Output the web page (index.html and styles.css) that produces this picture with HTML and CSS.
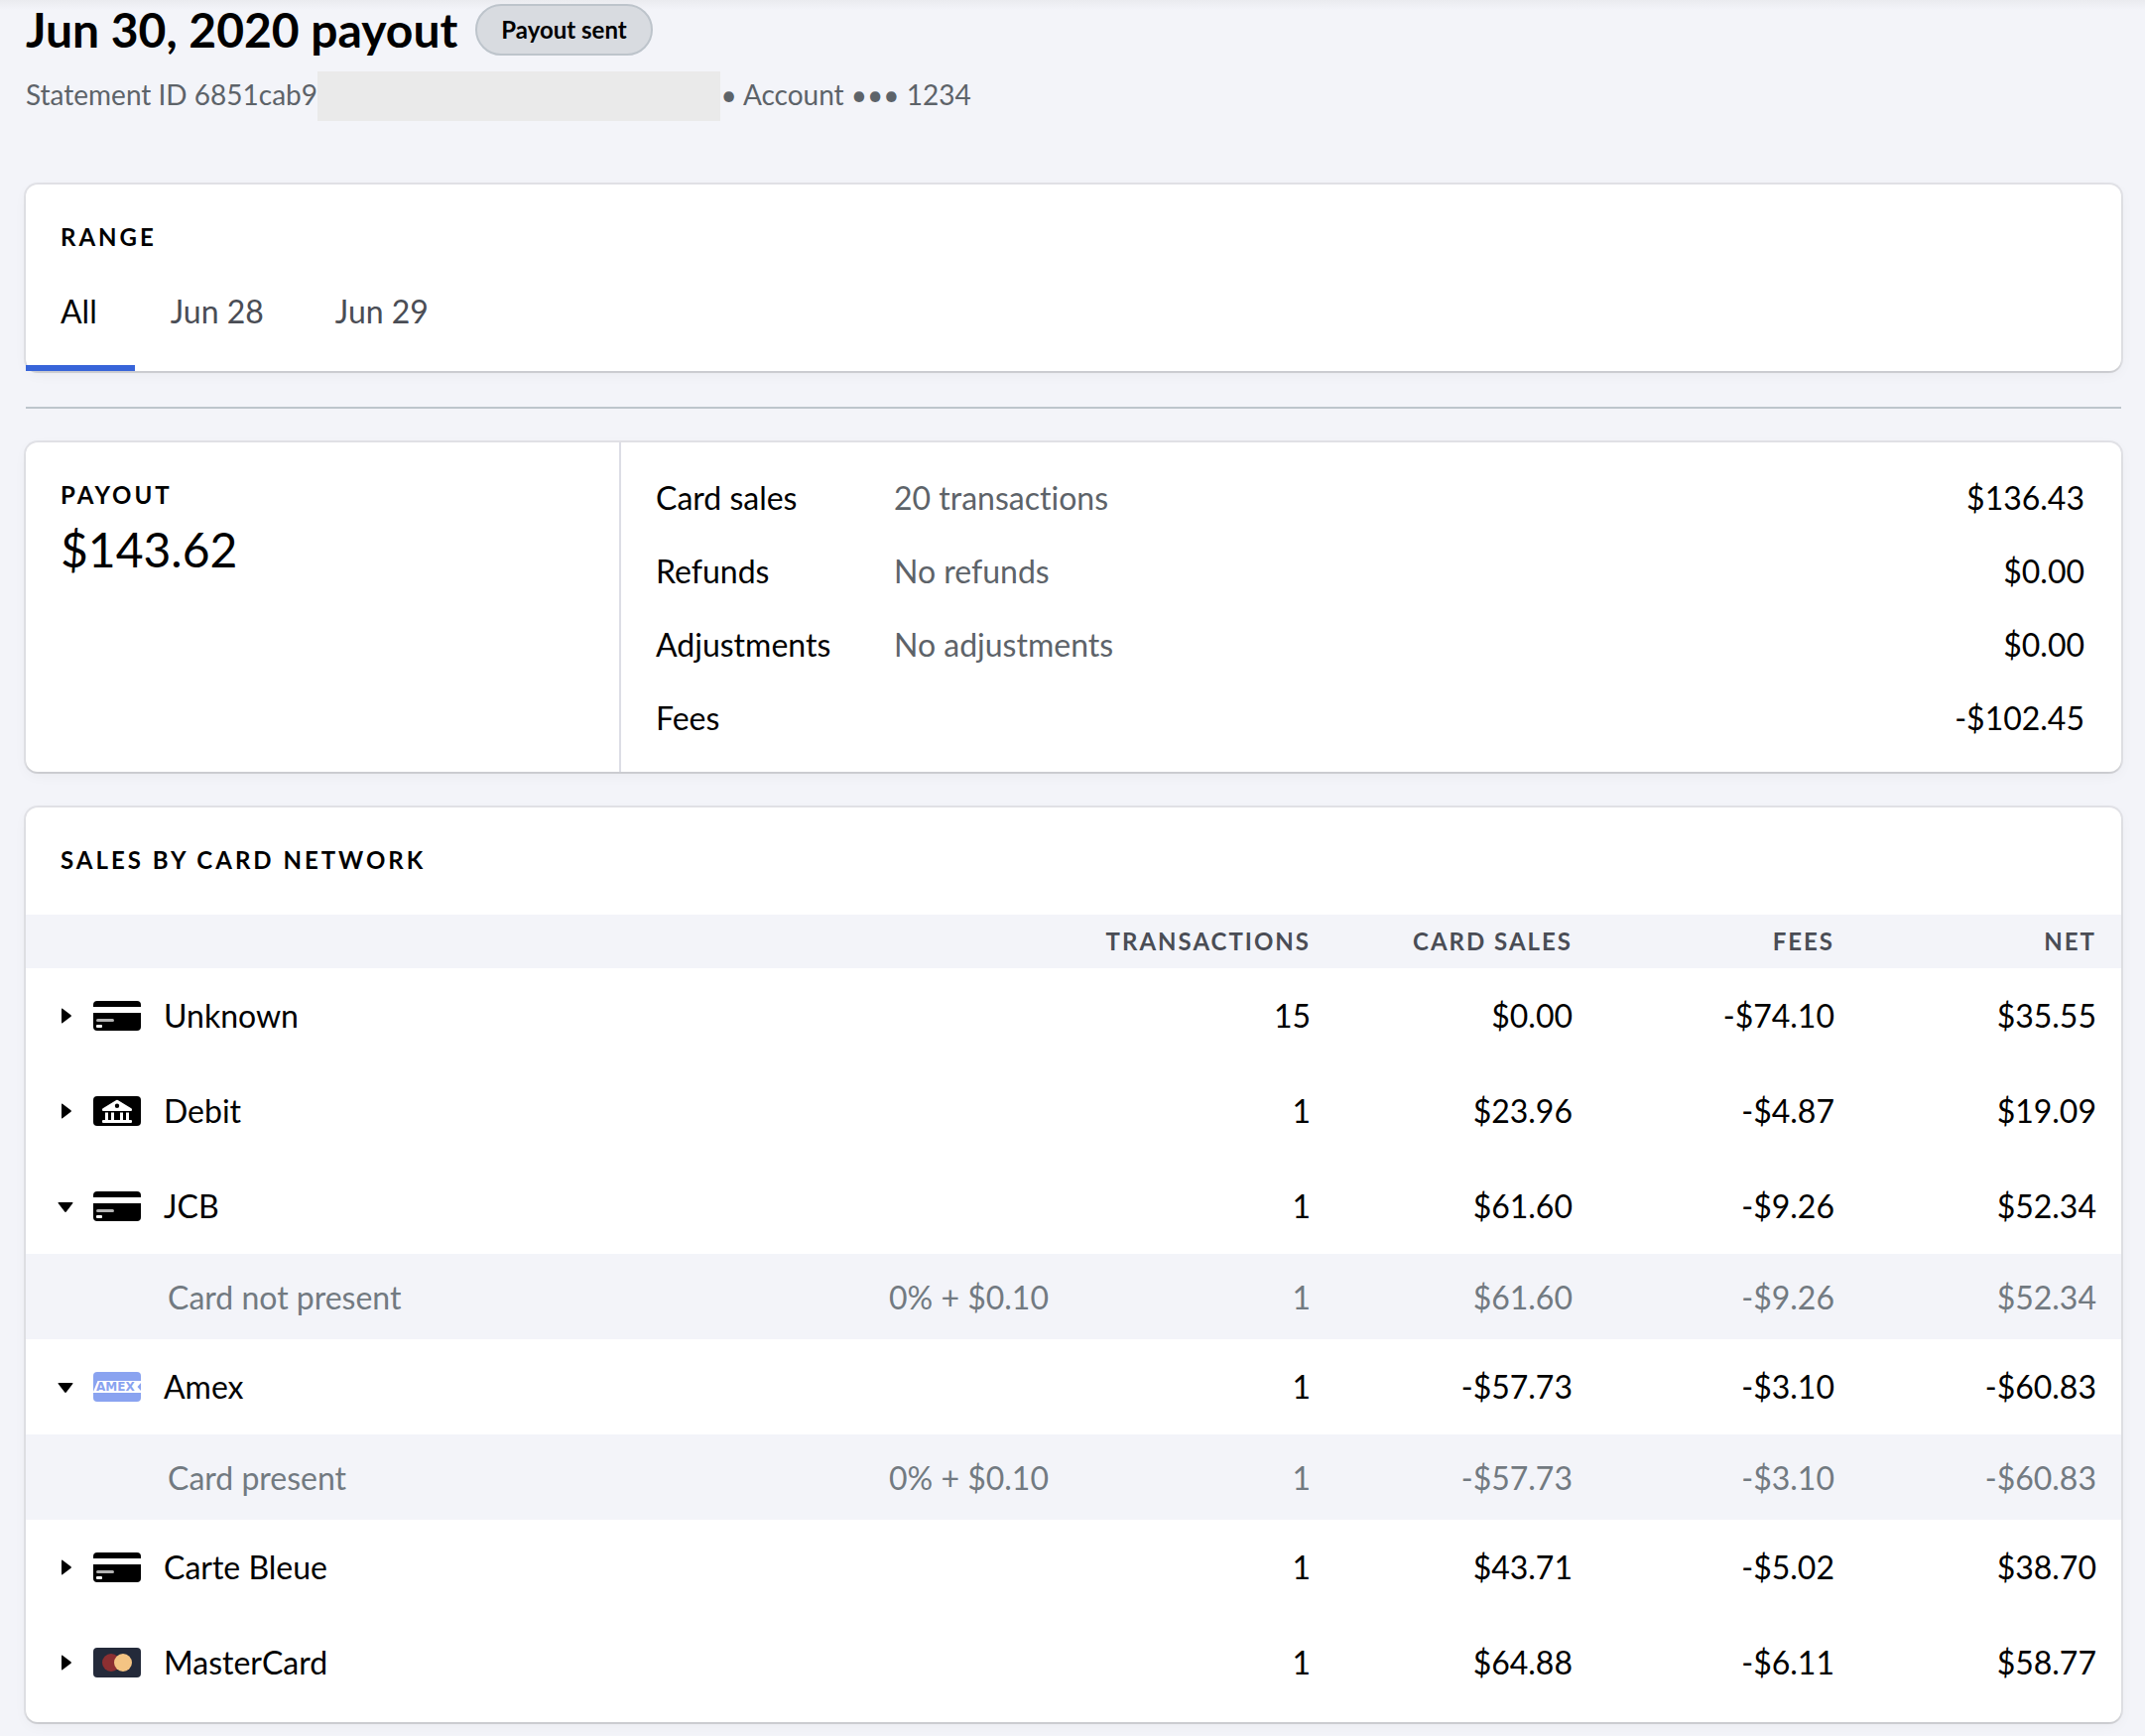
FILE: index.html
```html
<!DOCTYPE html>
<html lang="en">
<head>
<meta charset="utf-8">
<meta name="viewport" content="width=device-width, initial-scale=1">
<title>Jun 30, 2020 payout</title>
<link rel="stylesheet" href="styles.css">
</head>
<body>
<svg class="sprite" aria-hidden="true">
  <symbol id="chevron-right" viewBox="0 0 16 16"><path d="M4 1.2Q4 0 5 .7L13.5 7.2Q14.4 8 13.5 8.8L5 15.3Q4 16 4 14.8Z"/></symbol>
  <symbol id="chevron-down" viewBox="0 0 16 16"><path d="M1.2 4Q0 4 .7 5L7.2 13.500Q8 14.400 8.800 13.500L15.300 5Q16 4 14.800 4Z"/></symbol>
  <symbol id="card-generic" viewBox="0 0 48 30">
    <path d="M4 0H44Q48 0 48 4V6H0V4Q0 0 4 0Z"/>
    <path d="M0 12H48V26Q48 30 44 30H4Q0 30 0 26Z"/>
    <rect x="3" y="18" width="18" height="3" rx="1.5" fill="#b3b3b3"/>
    <rect x="3" y="24" width="6" height="3" rx="1" fill="#fff"/>
  </symbol>
  <symbol id="card-debit" viewBox="0 0 48 30">
    <rect width="48" height="30" rx="4"/>
    <g fill="#fff">
      <path fill-rule="evenodd" d="M23.200 3.900Q24 3.400 24.800 3.900L38.300 12.200Q39 12.700 39 13.400V14Q39 15 38 15H10Q9 15 9 14V13.400Q9 12.700 9.700 12.200ZM24 7.600A2.200 2.200 0 1 0 24 12A2.200 2.200 0 1 0 24 7.600Z"/>
      <path d="M12 16.500H15V24H18V16.500H21V24H27V16.500H30V24H33V16.500H36V24H38Q39 24 39 25V26Q39 27 38 27H10Q9 27 9 26V25Q9 24 10 24H12Z"/>
    </g>
  </symbol>
  <symbol id="card-amex" viewBox="0 0 48 30">
    <rect width="48" height="30" rx="4" fill="#8aa3f0"/>
    <path d="M4.500 9H48V11L44.500 15L48 19V21H0V20Z" fill="#fff"/>
    <text x="3" y="19" class="amex-word">AMEX</text>
  </symbol>
  <symbol id="card-mastercard" viewBox="0 0 48 30">
    <rect width="48" height="30" rx="4" fill="#242a3a"/>
    <circle cx="18" cy="15" r="9" fill="#8c2f31"/>
    <circle cx="30" cy="15" r="9" fill="#f4c483"/>
  </symbol>
</svg>

<main class="page">
  <header class="page-header">
    <div class="title-row">
      <h1 class="title">Jun 30, 2020 payout</h1>
      <span class="badge">Payout sent</span>
    </div>
    <p class="subtitle">
      <span>Statement ID 6851cab9-</span>
      <span class="redacted"></span>
      <span>• Account ••• 1234</span>
    </p>
  </header>

  <section class="card range">
    <h2 class="label">Range</h2>
    <div class="tabs" role="tablist">
      <button class="tab tab-active" type="button" role="tab" aria-selected="true">All</button>
      <button class="tab" type="button" role="tab" aria-selected="false">Jun 28</button>
      <button class="tab" type="button" role="tab" aria-selected="false">Jun 29</button>
    </div>
  </section>

  <hr class="divider">

  <section class="card summary">
    <div class="summary-total">
      <h2 class="label">Payout</h2>
      <p class="amount">$143.62</p>
    </div>
    <table class="breakdown">
      <tbody>
        <tr><th scope="row">Card sales</th><td class="note">20 transactions</td><td class="num">$136.43</td></tr>
        <tr><th scope="row">Refunds</th><td class="note">No refunds</td><td class="num">$0.00</td></tr>
        <tr><th scope="row">Adjustments</th><td class="note">No adjustments</td><td class="num">$0.00</td></tr>
        <tr><th scope="row">Fees</th><td class="note"></td><td class="num">-$102.45</td></tr>
      </tbody>
    </table>
  </section>

  <section class="card sales">
    <h2 class="label sales-title">Sales by card network</h2>
    <table class="networks">
      <colgroup><col class="col-name"><col><col><col><col><col></colgroup>
      <thead>
        <tr><td></td><td></td><th scope="col">Transactions</th><th scope="col">Card sales</th><th scope="col">Fees</th><th scope="col">Net</th></tr>
      </thead>
      <tbody>
        <tr class="network">
          <th scope="row"><button class="toggle" type="button" aria-expanded="false"><svg class="chevron" aria-hidden="true"><use href="#chevron-right"/></svg><svg class="brand" aria-hidden="true"><use href="#card-generic"/></svg>Unknown</button></th>
          <td></td><td>15</td><td>$0.00</td><td>-$74.10</td><td>$35.55</td>
        </tr>
        <tr class="network">
          <th scope="row"><button class="toggle" type="button" aria-expanded="false"><svg class="chevron" aria-hidden="true"><use href="#chevron-right"/></svg><svg class="brand" aria-hidden="true"><use href="#card-debit"/></svg>Debit</button></th>
          <td></td><td>1</td><td>$23.96</td><td>-$4.87</td><td>$19.09</td>
        </tr>
        <tr class="network">
          <th scope="row"><button class="toggle" type="button" aria-expanded="true"><svg class="chevron" aria-hidden="true"><use href="#chevron-down"/></svg><svg class="brand" aria-hidden="true"><use href="#card-generic"/></svg>JCB</button></th>
          <td></td><td>1</td><td>$61.60</td><td>-$9.26</td><td>$52.34</td>
        </tr>
        <tr class="detail">
          <th scope="row">Card not present</th>
          <td>0% + $0.10</td><td>1</td><td>$61.60</td><td>-$9.26</td><td>$52.34</td>
        </tr>
        <tr class="network">
          <th scope="row"><button class="toggle" type="button" aria-expanded="true"><svg class="chevron" aria-hidden="true"><use href="#chevron-down"/></svg><svg class="brand" aria-hidden="true"><use href="#card-amex"/></svg>Amex</button></th>
          <td></td><td>1</td><td>-$57.73</td><td>-$3.10</td><td>-$60.83</td>
        </tr>
        <tr class="detail">
          <th scope="row">Card present</th>
          <td>0% + $0.10</td><td>1</td><td>-$57.73</td><td>-$3.10</td><td>-$60.83</td>
        </tr>
        <tr class="network">
          <th scope="row"><button class="toggle" type="button" aria-expanded="false"><svg class="chevron" aria-hidden="true"><use href="#chevron-right"/></svg><svg class="brand" aria-hidden="true"><use href="#card-generic"/></svg>Carte Bleue</button></th>
          <td></td><td>1</td><td>$43.71</td><td>-$5.02</td><td>$38.70</td>
        </tr>
        <tr class="network">
          <th scope="row"><button class="toggle" type="button" aria-expanded="false"><svg class="chevron" aria-hidden="true"><use href="#chevron-right"/></svg><svg class="brand" aria-hidden="true"><use href="#card-mastercard"/></svg>MasterCard</button></th>
          <td></td><td>1</td><td>$64.88</td><td>-$6.11</td><td>$58.77</td>
        </tr>
      </tbody>
    </table>
  </section>
</main>
</body>
</html>
```
FILE: styles.css
```css
*,
*::before,
*::after {
  box-sizing: border-box;
}

body {
  margin: 0;
  background: #f3f4f9;
  color: #000;
  font-family: Lato, "Open Sans", sans-serif;
  font-size: 32px;
  line-height: 42px;
  font-variant-ligatures: none;
}

h1,
h2,
p {
  margin: 0;
}

button {
  border: 0;
  padding: 0;
  background: none;
  color: inherit;
  font: inherit;
  cursor: pointer;
}

table {
  border-collapse: collapse;
}

th,
td {
  padding: 0;
}

.sprite {
  display: none;
}

.page {
  padding: 0 24px 14px 26px;
  background: linear-gradient(#eaebef, #f3f4f9) top / 100% 10px no-repeat;
}

/* Header */

.page-header {
  padding-bottom: 64px;
}

.title-row {
  display: flex;
  align-items: center;
  gap: 18px;
}

.title {
  font-size: 48px;
  font-weight: 700;
  line-height: 60px;
}

.badge {
  padding: 6px 24px;
  border: 2px solid #bdc4cb;
  border-radius: 26px;
  background: #d8dbe0;
  font-size: 24px;
  font-weight: 700;
  line-height: 36px;
}

.subtitle {
  display: flex;
  margin-top: 12px;
  color: #5d6369;
  font-size: 28px;
  line-height: 46px;
}

.redacted {
  z-index: 1;
  width: 406px;
  height: 50px;
  margin-left: -10px;
  background: #eaeaea;
}

/* Cards */

.card {
  border-radius: 12px;
  background: #fff;
  box-shadow:
    0 0 0 2px rgba(0, 0, 0, 0.07),
    0 2px 1px rgba(0, 0, 0, 0.08),
    0 4px 14px rgba(0, 0, 0, 0.04);
}

.label {
  font-size: 24px;
  font-weight: 700;
  line-height: 34px;
  letter-spacing: 3px;
  text-transform: uppercase;
}

.range .label {
  padding: 36px 35px 0;
}

.tabs {
  display: flex;
}

.tab {
  padding: 37px 36px 33px 35px;
  border-bottom: 6px solid transparent;
  color: #4a4d55;
}

.tab + .tab {
  padding-left: 36px;
}

.tab-active {
  padding-right: 38px;
  border-color: #3764d9;
  color: #000;
}

.divider {
  height: 2px;
  margin: 36px 0 34px;
  border: 0;
  background: #bdc5cc;
}

/* Payout summary */

.summary {
  display: flex;
}

.summary-total {
  flex: 0 0 600px;
  padding: 36px 35px;
  border-right: 2px solid #dcdde5;
}

.amount {
  margin-top: 8px;
  font-size: 48px;
  line-height: 60px;
}

.breakdown {
  flex: 1;
  display: table;
  margin: 19px 37px 17px 35px;
}

.breakdown th {
  width: 240px;
  height: 74px;
  font-weight: 400;
  text-align: left;
}

.breakdown .note {
  color: #5d6369;
}

.breakdown .num {
  text-align: right;
}

/* Sales by card network */

.sales {
  margin-top: 36px;
  padding-bottom: 12px;
}

.sales-title {
  padding: 36px 35px 38px;
}

.networks {
  width: 100%;
  table-layout: fixed;
}

.col-name {
  width: 37.5%;
}

.networks th,
.networks td {
  padding-right: 25px;
  font-weight: 400;
  text-align: right;
}

.networks thead {
  background: #f3f4f9;
  color: #4a4d55;
}

.networks thead th {
  height: 54px;
  font-size: 24px;
  font-weight: 700;
  line-height: 34px;
  letter-spacing: 2px;
  text-transform: uppercase;
}

.networks tbody th {
  text-align: left;
}

.networks .network th {
  height: 96px;
  padding-left: 32px;
}

.detail {
  background: #f3f4f9;
  color: #727a81;
}

.networks .detail th {
  height: 86px;
  padding-left: 143px;
}

.detail th,
.detail td {
  padding-top: 2px;
}

.toggle {
  display: flex;
  align-items: center;
}

.chevron {
  width: 16px;
  height: 16px;
  margin-right: 20px;
}

.brand {
  width: 48px;
  height: 30px;
  margin-right: 23px;
}

.amex-word {
  fill: #8aa3f0;
  font-family: "DejaVu Sans", sans-serif;
  font-size: 12px;
  font-weight: 700;
}
```
